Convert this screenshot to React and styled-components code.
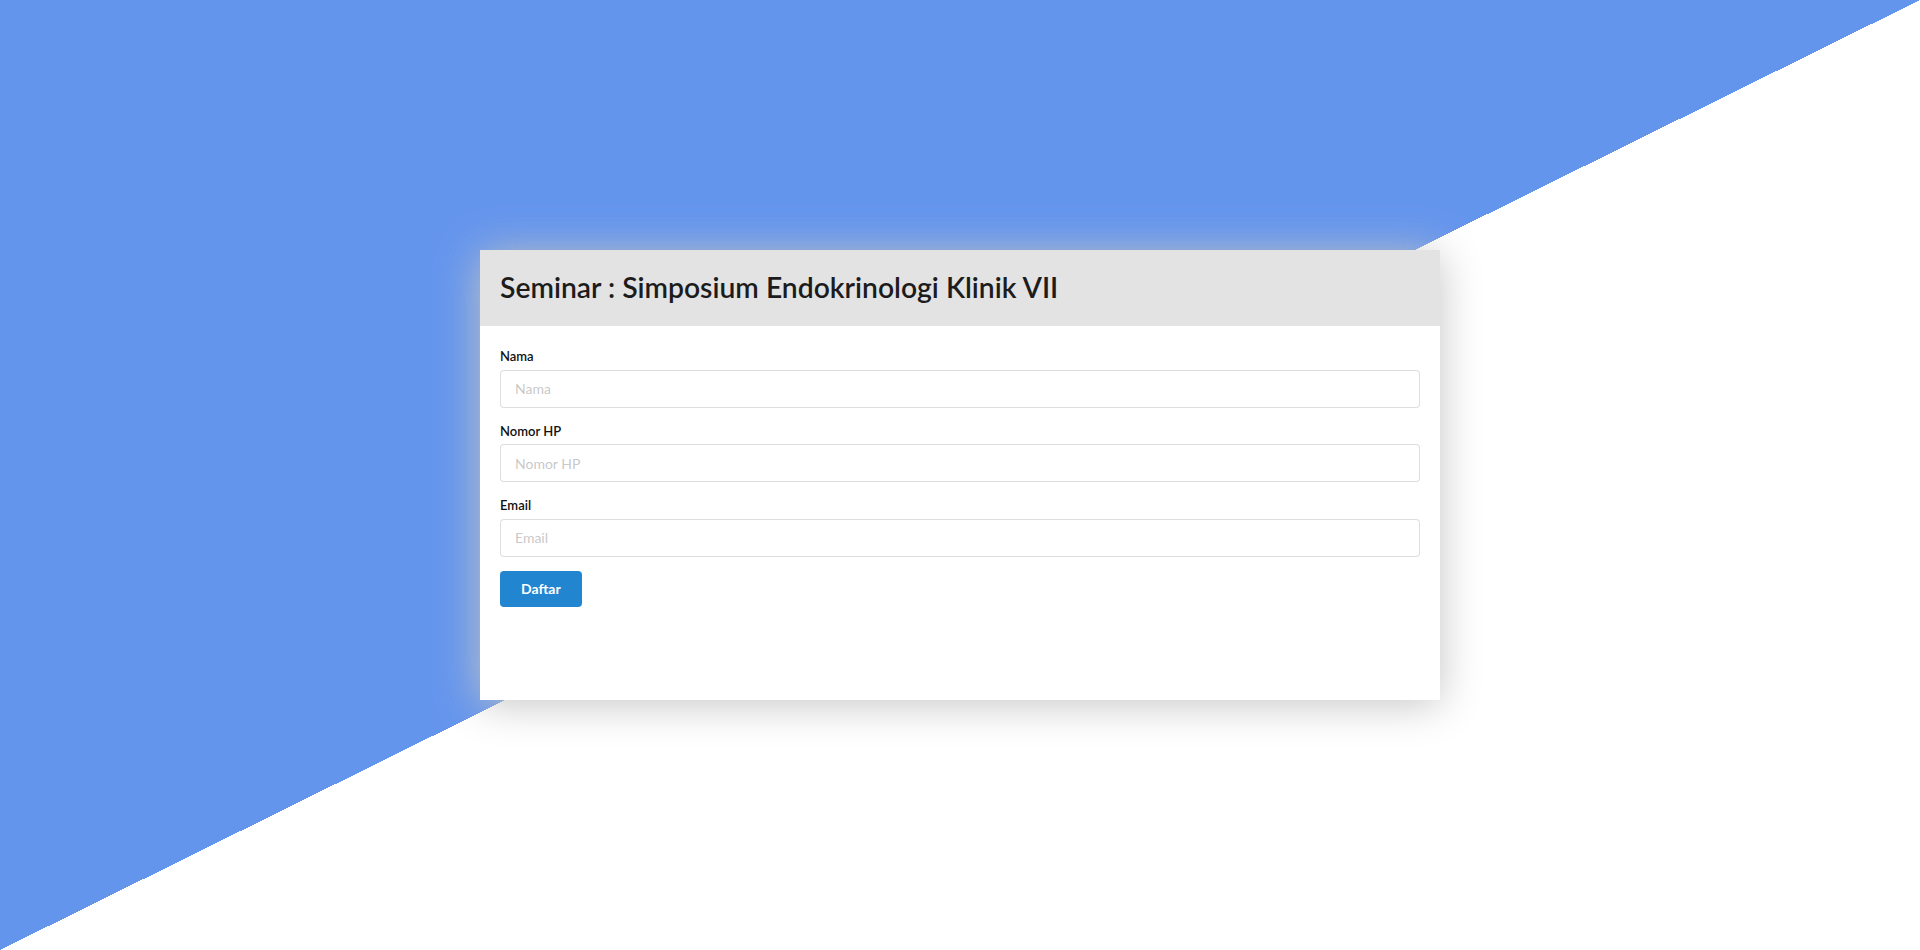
import React from "react";
import styled, { createGlobalStyle } from "styled-components";

const Global = createGlobalStyle`
  html, body { margin: 0; padding: 0; }
  body {
    font-family: Lato, "Helvetica Neue", Arial, sans-serif;
    font-size: 14px;
    line-height: 1.4285em;
    color: rgba(0,0,0,.87);
  }
  * { box-sizing: border-box; }
`;

const Page = styled.div`
  width: 100%;
  height: 100vh;
  display: flex;
  align-items: center;
  justify-content: center;
  background: linear-gradient(to bottom right, #6495ed 50%, #ffffff 50%);
`;

const Card = styled.div`
  width: 960px;
  height: 450px;
  background: #ffffff;
  box-shadow: 0 4px 40px #c4c4c4;
  display: flex;
  flex-direction: column;
`;

const Header = styled.div`
  height: 76px;
  background: #e3e3e3;
  display: flex;
  align-items: center;
  padding: 0 20px;
`;

const Title = styled.h2`
  margin: 0;
  font-family: Lato, sans-serif;
  font-weight: 600;
  font-size: 28.3px;
  line-height: 1.2;
  color: #1c1c1c;
`;

const Form = styled.form`
  padding: 21px 20px;
  display: flex;
  flex-direction: column;
`;

const Field = styled.div`
  margin-bottom: 14px;
  display: flex;
  flex-direction: column;
`;

const Label = styled.label`
  display: block;
  font-size: 13px;
  font-weight: 600;
  line-height: 18.5px;
  margin-bottom: 4px;
  color: #111;
`;

const Input = styled.input`
  width: 100%;
  font-family: Lato, sans-serif;
  font-size: 14px;
  line-height: 1.21428571em;
  padding: 9.5px 14px;
  border: 1px solid rgba(34,36,38,.15);
  border-radius: 4px;
  color: rgba(0,0,0,.87);
  outline: none;
  background: #fff;
  &::placeholder { color: rgba(191,191,191,.87); }
`;

const Button = styled.button`
  align-self: flex-start;
  font-family: Lato, sans-serif;
  font-size: 14px;
  font-weight: 700;
  line-height: 1em;
  padding: 11px 21px;
  border: none;
  border-radius: 4px;
  background: #2185d0;
  color: #fff;
  cursor: pointer;
`;

const fields = [
  { name: "nama", label: "Nama", type: "text" },
  { name: "hp", label: "Nomor HP", type: "text" },
  { name: "email", label: "Email", type: "email" },
];

export default function App() {
  return (
    <>
      <Global />
      <Page>
        <Card>
          <Header>
            <Title>Seminar : Simposium Endokrinologi Klinik VII</Title>
          </Header>
          <Form onSubmit={(e) => e.preventDefault()}>
            {fields.map((f) => (
              <Field key={f.name}>
                <Label htmlFor={f.name}>{f.label}</Label>
                <Input id={f.name} name={f.name} type={f.type} placeholder={f.label} />
              </Field>
            ))}
            <Button type="submit">Daftar</Button>
          </Form>
        </Card>
      </Page>
    </>
  );
}
